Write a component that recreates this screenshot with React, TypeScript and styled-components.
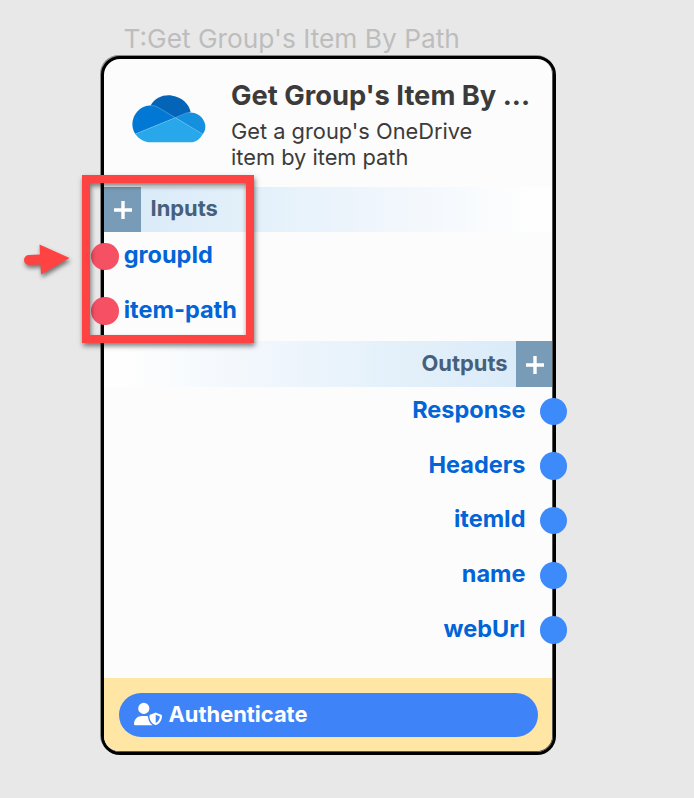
import React from "react";
import styled, { createGlobalStyle } from "styled-components";
import { FaUserShield } from "react-icons/fa6";

const GlobalStyle = createGlobalStyle`
  * { box-sizing: border-box; }
  body {
    margin: 0;
    background: #e8e8e8;
    font-family: Inter, sans-serif;
  }
`;

const Canvas = styled.main`
  position: relative;
  width: 694px;
  height: 798px;
  padding: 22px 0 0 101px;
  overflow: hidden;
  background: #e8e8e8;
`;

const NodeCaption = styled.div`
  height: 34px;
  padding-left: 22.5px;
  color: #bdbdbd;
  font-size: 26.3px;
  line-height: 34px;
  white-space: nowrap;
`;

const Card = styled.section`
  display: flex;
  flex-direction: column;
  width: 455px;
  height: 699px;
  padding: 0 1px 1px 0;
  border: 3px solid #000;
  border-radius: 19px;
  background: #fcfcfc;
  box-shadow: -1px -1px 0 #8c8c8c, inset -1px -1px 0 #555;
`;

const Header = styled.header`
  display: flex;
  flex: none;
  height: 127.5px;
  padding: 19px 18px 0 28px;
  gap: 25px;
`;

const Logo = styled.svg`
  flex: none;
  width: 74px;
  height: 48px;
  margin-top: 16.5px;
`;

const Heading = styled.div`
  flex: 1;
  min-width: 0;
`;

const Title = styled.h1`
  margin: 0;
  color: #3b3b3b;
  font-size: 27.3px;
  font-weight: 700;
  line-height: 36px;
  white-space: nowrap;
`;

const Description = styled.p`
  margin: 4px 0 0;
  color: #3b3b3b;
  font-size: 21.8px;
  line-height: 26px;
  white-space: nowrap;
`;

const SectionBar = styled.div<{ $side: "left" | "right" }>`
  display: flex;
  flex: none;
  flex-direction: ${(p) => (p.$side === "left" ? "row" : "row-reverse")};
  align-items: center;
  gap: ${(p) => (p.$side === "left" ? 10 : 8)}px;
  height: 45.5px;
  background: linear-gradient(
    ${(p) => (p.$side === "left" ? "to right" : "to left")},
    #d8e9f8 0%,
    #e4f1fa 36%,
    #eef5fc 58%,
    #fefefe 96%
  );
`;

const AddButton = styled.button`
  display: grid;
  place-items: center;
  width: 36.5px;
  height: 100%;
  padding: 2px 0 0 2px;
  border: 0;
  background: #789cb7;
`;

const SectionTitle = styled.h2`
  margin: 0 0 2px;
  color: #46607c;
  font-size: 21.9px;
  font-weight: 700;
  line-height: 30px;
`;

const Ports = styled.ul`
  margin: 0;
  padding: 0;
  list-style: none;
`;

const Port = styled.li<{ $side: "left" | "right" }>`
  display: flex;
  flex-direction: ${(p) => (p.$side === "left" ? "row" : "row-reverse")};
  align-items: center;
  gap: ${(p) => (p.$side === "left" ? 5 : 14)}px;
  height: 54.7px;
  margin: ${(p) => (p.$side === "left" ? "0 0 0 -12.8px" : "0 -15px 0 0")};
  padding-bottom: 5.8px;
`;

const Dot = styled.span<{ $color: string }>`
  width: 27.5px;
  height: 27.5px;
  border-radius: 50%;
  background: ${(p) => p.$color};
`;

const PortName = styled.span`
  margin-bottom: 3px;
  color: #0364d8;
  font-size: 23.5px;
  font-weight: 700;
  line-height: 30px;
`;

const Footer = styled.footer`
  height: 72.7px;
  margin-top: auto;
  padding: 14.5px 14.5px 0;
  border-radius: 0 0 15px 15px;
  background: #ffe6a5;
`;

const AuthButton = styled.button`
  display: flex;
  align-items: center;
  width: 100%;
  height: 44px;
  padding: 0 15px 2px;
  gap: 7px;
  border: 0;
  border-radius: 22px;
  background: #3f83f8;
  color: #fff;
  font: 700 21.9px/30px Inter, sans-serif;
`;

const Callout = styled.div`
  position: absolute;
  left: 82px;
  top: 175px;
  width: 172px;
  height: 168px;
  border: 8px solid #ff4242;
  box-shadow: 1px 3px 5px rgba(0, 0, 0, 0.5), inset 1px 3px 5px rgba(0, 0, 0, 0.5);
`;

const Pointer = styled.svg`
  position: absolute;
  left: 16px;
  top: 236px;
  filter: drop-shadow(1px 3px 2px rgba(0, 0, 0, 0.5));
`;

const CloudLogo = () => (
  <Logo viewBox="37 29 222 144">
    <path fill="#0364b8" d="M92 62C107 35 133 27 158 31C185 35 209 55 213 81L167 98L110 65Z" />
    <path fill="#0078d4" d="M47 146C28 117 41 78 73 64C88 58 102 60 115 66L167 97Z" />
    <path fill="#1490df" d="M167 97L195 85C221 75 248 89 256 115C259 128 256 138 249 147Z" />
    <path fill="#28a8ea" d="M167 97L249 146C241 161 230 171 211 171H93C74 171 57 161 47 146Z" />
    <path
      fill="none"
      stroke="#8bcaf2"
      strokeOpacity=".65"
      strokeWidth="1.8"
      d="M92 61Q104 59 115 66L249 146M47 146L195 85Q203 81 213 81"
    />
  </Logo>
);

const Plus = () => (
  <svg width="18" height="18" viewBox="0 0 18 18">
    <path d="M0 9H18M9 0V18" stroke="#fff" strokeWidth="3.4" />
  </svg>
);

const inputs = ["groupId", "item-path"];
const outputs = ["Response", "Headers", "itemId", "name", "webUrl"];

export default function App() {
  return (
    <>
      <GlobalStyle />
      <Canvas>
        <NodeCaption>T:Get Group's Item By Path</NodeCaption>
        <Card>
          <Header>
            <CloudLogo />
            <Heading>
              <Title>Get Group's Item By ...</Title>
              <Description>
                Get a group's OneDrive
                <br />
                item by item path
              </Description>
            </Heading>
          </Header>
          <SectionBar $side="left">
            <AddButton aria-label="Add input">
              <Plus />
            </AddButton>
            <SectionTitle>Inputs</SectionTitle>
          </SectionBar>
          <Ports>
            {inputs.map((name) => (
              <Port key={name} $side="left">
                <Dot $color="#f55064" />
                <PortName>{name}</PortName>
              </Port>
            ))}
          </Ports>
          <SectionBar $side="right">
            <AddButton aria-label="Add output">
              <Plus />
            </AddButton>
            <SectionTitle>Outputs</SectionTitle>
          </SectionBar>
          <Ports>
            {outputs.map((name) => (
              <Port key={name} $side="right">
                <Dot $color="#3d8afa" />
                <PortName>{name}</PortName>
              </Port>
            ))}
          </Ports>
          <Footer>
            <AuthButton>
              <FaUserShield size={28} />
              Authenticate
            </AuthButton>
          </Footer>
        </Card>
        <Callout />
        <Pointer width="60" height="46" viewBox="16 236 60 46">
          <path d="M29 255L40 254.5L39.5 244.5L69.5 258L41 274.5L40.5 264.5L29 265A5 5 0 0 1 29 255Z" fill="#ff4242" />
        </Pointer>
      </Canvas>
    </>
  );
}
